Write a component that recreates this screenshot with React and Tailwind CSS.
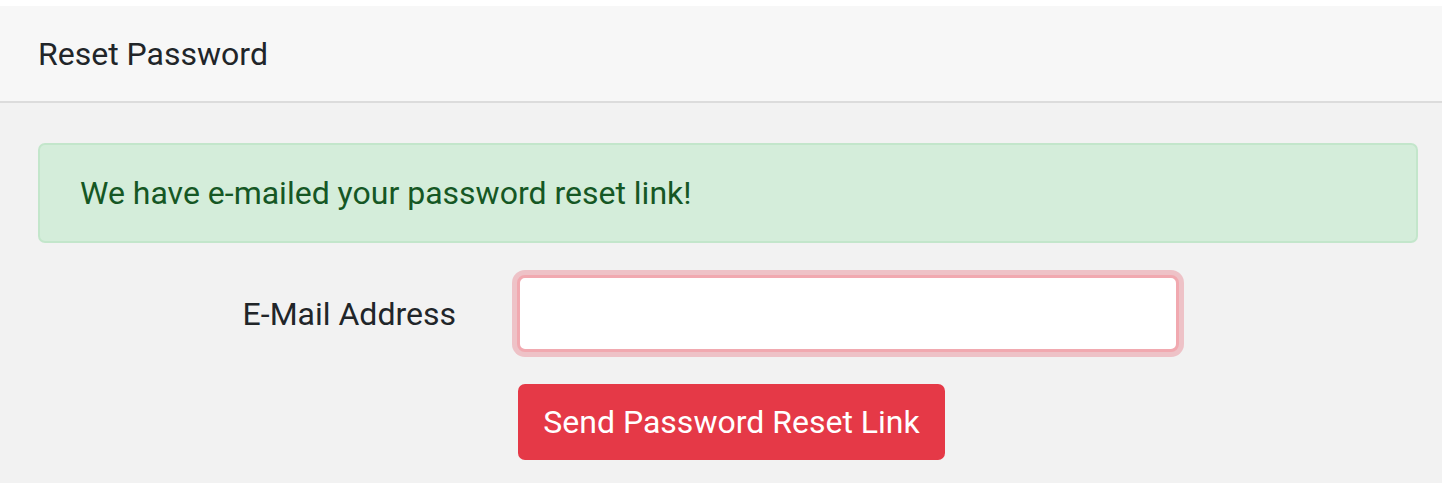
import React from 'react';

const App = () => {
  return (
    <div className="w-[1442px] h-[483px] overflow-hidden bg-white pt-[6px] text-[#212529]" style={{ fontFamily: 'Roboto, "Liberation Sans", sans-serif' }}>
      <div className="h-[97px] bg-[#f7f7f7] border-b-2 border-[#dcdcdc] flex items-center px-[38px]">
        <h1 className="text-[32px] leading-none font-normal">Reset Password</h1>
      </div>

      <div className="bg-[#f2f2f2] h-full px-[38px] pt-[40px]">
        <div className="h-[100px] w-[1380px] bg-[#d4edda] border-2 border-[#c3e6cb] rounded-[7px] text-[#155724] flex items-center px-[40px] text-[32px]">
          We have e-mailed your password reset link!
        </div>

        <div className="flex items-center mt-[32px]">
          <label className="w-[418px] text-right text-[32px]">E-Mail Address</label>
          <input
            type="email"
            className="ml-[61px] w-[662px] h-[77px] bg-white border-[3px] border-[#f1a9b0] rounded-[8px] outline-none shadow-[0_0_0_5px_rgba(227,52,71,0.25)]"
          />
        </div>

        <div className="flex mt-[32px] pl-[480px]">
          <button className="w-[427px] h-[76px] bg-[#e53947] text-white text-[32px] rounded-[7px]">
            Send Password Reset Link
          </button>
        </div>
      </div>
    </div>
  );
};

export default App;
